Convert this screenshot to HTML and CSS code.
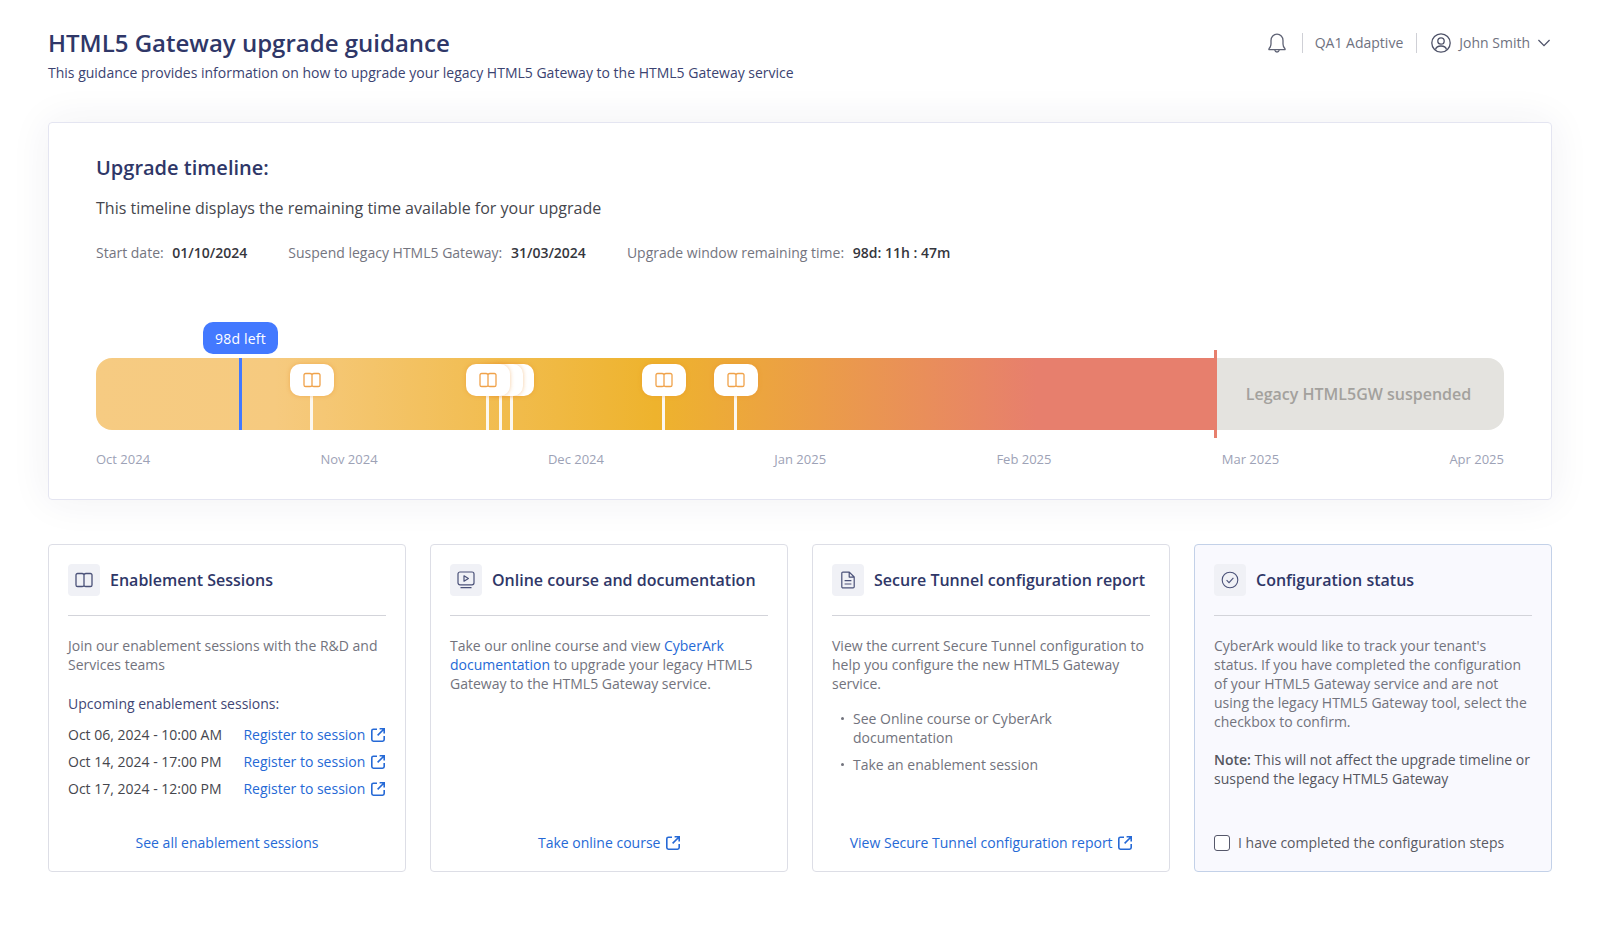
FILE: index.html
```html
<!DOCTYPE html>
<html lang="en">
<head>
    <meta charset="UTF-8">
    <meta name="viewport" content="width=device-width, initial-scale=1.0">
    <title>HTML5 Gateway upgrade guidance</title>
    <link rel="stylesheet" href="styles.css">
</head>
<body>
    <svg class="sprites" width="0" height="0">
        <symbol id="ico-book" viewBox="0 0 18 16">
            <path d="M9 2.500C8.500 1.900 7.800 1.500 7 1.500H2.600C1.700 1.500 1 2.200 1 3.100v9.800c0 .9.7 1.600 1.600 1.600H7c.8 0 1.500-.2 2-.7.5.5 1.200.7 2 .7h4.400c.9 0 1.600-.7 1.600-1.600V3.100c0-.9-.7-1.600-1.600-1.600H11c-.8 0-1.500.4-2 1zM9 2.500v11.300" fill="none" stroke="currentColor" stroke-width="1.300" stroke-linejoin="round"/>
        </symbol>
        <symbol id="ico-external" viewBox="0 0 14 14">
            <path d="M6 1.200H2.400C1.500 1.200.8 1.900.8 2.800v8.800c0 .9.7 1.600 1.600 1.600h9.200c.9 0 1.600-.7 1.600-1.600V8M8.600.8h4.600v4.600M13 1 6.600 7.400" fill="none" stroke="currentColor" stroke-width="1.600"/>
        </symbol>
    </svg>

    <!-- Page title and user bar -->
    <header class="page-head">
        <div>
            <h1 class="page-title">HTML5 Gateway upgrade guidance</h1>
            <p class="page-sub">This guidance provides information on how to upgrade your legacy HTML5 Gateway to the HTML5 Gateway service</p>
        </div>
        <div class="user-bar">
            <svg class="bell" width="22" height="22" viewBox="0 0 22 22" fill="none" stroke="currentColor" stroke-width="1.300">
                <path d="M3 16.800c1.300-1.300 2-2.700 2-4.800V8.500C5 5 7.600 2.200 11 2.200S17 5 17 8.500V12c0 2.100.7 3.500 2 4.800.3.400.1.900-.4.900H3.400c-.5 0-.7-.5-.4-.9z" stroke-linejoin="round"/>
                <path d="M8.800 18c.2 1.200 1.100 2 2.200 2s2-.8 2.200-2"/>
            </svg>
            <span class="user-sep"></span>
            <span class="user-text">QA1 Adaptive</span>
            <span class="user-sep"></span>
            <svg class="user-ico" width="20" height="20" viewBox="0 0 20 20" fill="none" stroke="currentColor" stroke-width="1.300">
                <circle cx="10" cy="10" r="9.200"/>
                <circle cx="10" cy="8" r="3.200"/>
                <path d="M4.500 16.500c.6-2.400 2.500-3.500 5.500-3.500s4.900 1.100 5.500 3.500"/>
            </svg>
            <span class="user-text">John Smith</span>
            <svg class="chevron" width="12" height="8" viewBox="0 0 12 8" fill="none" stroke="currentColor" stroke-width="1.300">
                <path d="M.4 1 6 6.600 11.600 1"/>
            </svg>
        </div>
    </header>

    <!-- Timeline -->
    <section class="timeline-card">
        <h2 class="timeline-title">Upgrade timeline:</h2>
        <p class="timeline-text">This timeline displays the remaining time available for your upgrade</p>
        <div class="stats">
            <span>Start date: <b>01/10/2024</b></span>
            <span>Suspend legacy HTML5 Gateway: <b>31/03/2024</b></span>
            <span>Upgrade window remaining time: <b>98d: 11h : 47m</b></span>
        </div>

        <div class="bar">
            <div class="bar-elapsed"></div>
            <div class="bar-suspended">Legacy HTML5GW suspended</div>
            <span class="bar-end"></span>

            <div class="now" style="left: 145px">
                <span class="now-label">98d left</span>
            </div>

            <div class="pin" style="left: 216px"><span class="pin-box"><svg><use href="#ico-book"/></svg></span></div>
            <div class="pin" style="left: 416px"><span class="pin-box"></span></div>
            <div class="pin" style="left: 405px"><span class="pin-box"></span></div>
            <div class="pin" style="left: 392px"><span class="pin-box"><svg><use href="#ico-book"/></svg></span></div>
            <div class="pin" style="left: 568px"><span class="pin-box"><svg><use href="#ico-book"/></svg></span></div>
            <div class="pin" style="left: 640px"><span class="pin-box"><svg><use href="#ico-book"/></svg></span></div>
        </div>

        <div class="axis">
            <span>Oct 2024</span>
            <span>Nov 2024</span>
            <span>Dec 2024</span>
            <span>Jan 2025</span>
            <span>Feb 2025</span>
            <span>Mar 2025</span>
            <span>Apr 2025</span>
        </div>
    </section>

    <!-- Cards -->
    <section class="cards">
        <article class="card">
            <div class="card-head">
                <span class="card-ico"><svg width="18" height="16"><use href="#ico-book"/></svg></span>
                <h3 class="card-title">Enablement Sessions</h3>
            </div>
            <p class="card-text">Join our enablement sessions with the R&amp;D and Services teams</p>
            <p class="upcoming">Upcoming enablement sessions:</p>
            <ul class="sessions">
                <li><span>Oct 06, 2024 - 10:00 AM</span><a class="link" href="#">Register to session <svg class="ext"><use href="#ico-external"/></svg></a></li>
                <li><span>Oct 14, 2024 - 17:00 PM</span><a class="link" href="#">Register to session <svg class="ext"><use href="#ico-external"/></svg></a></li>
                <li><span>Oct 17, 2024 - 12:00 PM</span><a class="link" href="#">Register to session <svg class="ext"><use href="#ico-external"/></svg></a></li>
            </ul>
            <div class="card-foot"><a class="link" href="#">See all enablement sessions</a></div>
        </article>

        <article class="card">
            <div class="card-head">
                <span class="card-ico">
                    <svg width="18" height="18" viewBox="0 0 18 18" fill="none" stroke="currentColor" stroke-width="1.200">
                        <rect x="1" y="1" width="16" height="12.800" rx="2"/>
                        <path d="M7 4.800v5.400l4.400-2.700zM3.500 16.600h11" stroke-linejoin="round"/>
                    </svg>
                </span>
                <h3 class="card-title">Online course and documentation</h3>
            </div>
            <p class="card-text">Take our online course and view <a class="link" href="#">CyberArk documentation</a> to upgrade your legacy HTML5 Gateway to the HTML5 Gateway service.</p>
            <div class="card-foot"><a class="link" href="#">Take online course <svg class="ext"><use href="#ico-external"/></svg></a></div>
        </article>

        <article class="card">
            <div class="card-head">
                <span class="card-ico">
                    <svg width="18" height="18" viewBox="0 0 18 18" fill="none" stroke="currentColor" stroke-width="1.200">
                        <path d="M2.800 2.200c0-.6.5-1.100 1.100-1.100h6.400l4.900 4.900v9.800c0 .6-.5 1.100-1.100 1.100H3.900c-.6 0-1.100-.5-1.100-1.100zM10.200 1.200v4.900h5M5.600 9.600h6.800M5.600 13h6.800" stroke-linejoin="round"/>
                    </svg>
                </span>
                <h3 class="card-title">Secure Tunnel configuration report</h3>
            </div>
            <p class="card-text">View the current Secure Tunnel configuration to help you configure the new HTML5 Gateway service.</p>
            <ul class="bullets">
                <li>See Online course or CyberArk documentation</li>
                <li>Take an enablement session</li>
            </ul>
            <div class="card-foot"><a class="link" href="#">View Secure Tunnel configuration report <svg class="ext"><use href="#ico-external"/></svg></a></div>
        </article>

        <article class="card card-status">
            <div class="card-head">
                <span class="card-ico">
                    <svg width="18" height="18" viewBox="0 0 18 18" fill="none" stroke="currentColor" stroke-width="1.100">
                        <circle cx="9" cy="9" r="7.800"/>
                        <path d="M5.600 9.200 8 11.600l4.400-4.800"/>
                    </svg>
                </span>
                <h3 class="card-title">Configuration status</h3>
            </div>
            <p class="card-text">CyberArk would like to track your tenant's status. If you have completed the configuration of your HTML5 Gateway service and are not using the legacy HTML5 Gateway tool, select the checkbox to confirm.</p>
            <p class="card-note"><b>Note:</b> This will not affect the upgrade timeline or suspend the legacy HTML5 Gateway</p>
            <label class="check">
                <span class="check-box"></span>
                I have completed the configuration steps
            </label>
        </article>
    </section>
</body>
</html>
```

FILE: styles.css
```css
* {
    box-sizing: border-box;
}

body {
    margin: 0;
    padding: 0 48px;
    background: #fff;
    font-family: "Open Sans", sans-serif;
    font-size: 14px;
    color: #4d4f5c;
}

h1, h2, h3, p, ul {
    margin: 0;
    padding: 0;
}

ul {
    list-style: none;
}

.sprites {
    position: absolute;
}

/* Header */
.page-head {
    display: flex;
    justify-content: space-between;
    padding-top: 27px;
}

.page-title {
    font-size: 24px;
    line-height: 32px;
    font-weight: 600;
    color: #2f3768;
}

.page-sub {
    margin-top: 4px;
    line-height: 20px;
    color: #3b4371;
}

.user-bar {
    display: flex;
    align-items: center;
    height: 32px;
    color: #6f727f;
}

.user-text {
    margin-top: -2px;
}

.bell {
    margin-right: 2px;
    color: #5f6375;
}

.user-sep {
    width: 1px;
    height: 20px;
    margin: 0 12px;
    background: #cfd0d6;
}

.user-text + .user-sep {
    margin-left: 13px;
}

.user-ico {
    margin: 0 8px 0 2px;
    color: #4e5268;
}

.chevron {
    margin: 0 2px 0 8px;
    color: #4e5268;
}

/* Timeline card */
.timeline-card {
    height: 378px;
    margin-top: 39px;
    padding: 31px 47px 0;
    border: 1px solid #e4e5f1;
    border-radius: 4px;
    box-shadow: 0 0 40px rgba(40, 44, 90, 0.07);
}

.timeline-title {
    font-size: 20px;
    line-height: 28px;
    font-weight: 600;
    color: #2f3768;
}

.timeline-text {
    margin-top: 14px;
    font-size: 16px;
    line-height: 24px;
    color: #45464d;
}

.stats {
    display: flex;
    gap: 41px;
    margin-top: 23px;
    line-height: 20px;
    color: #74757f;
}

.stats b {
    margin-left: 5px;
    font-weight: 600;
    color: #35363d;
}

.bar {
    position: relative;
    display: flex;
    height: 72px;
    margin-top: 95px;
}

.bar-elapsed {
    width: 1119px;
    border-radius: 16px 0 0 16px;
    background: linear-gradient(90deg, #f6cb82 0%, #f6ca7f 16%, #eeb32d 50%, #e77f6d 84%, #e77f6d 100%);
}

.bar-suspended {
    flex: 1;
    display: flex;
    align-items: center;
    justify-content: center;
    padding-right: 2px;
    border-radius: 0 16px 16px 0;
    background: #e4e3df;
    font-size: 16px;
    font-weight: 600;
    color: #a3a19d;
}

.bar-end {
    position: absolute;
    left: 1118px;
    top: -8px;
    width: 3px;
    height: 88px;
    background: #e77f6d;
}

.now {
    position: absolute;
    top: 0;
    bottom: 0;
    width: 3px;
    margin-left: -2px;
    background: #4379ff;
}

.now-label {
    position: absolute;
    left: -36px;
    top: -36px;
    display: flex;
    align-items: center;
    justify-content: center;
    width: 75px;
    height: 32px;
    border-radius: 10px;
    background: #4379ff;
    color: #fff;
    letter-spacing: 0.2px;
}

.pin {
    position: absolute;
    top: 38px;
    bottom: 0;
    width: 3px;
    margin-left: -2px;
    background: #fcf8f0;
}

.pin-box {
    position: absolute;
    left: -20px;
    top: -32px;
    display: flex;
    align-items: center;
    justify-content: center;
    width: 44px;
    height: 32px;
    border-radius: 10px;
    background: #fff;
    box-shadow: 0 0 4px rgba(232, 140, 40, 0.45);
    color: #f0a24a;
}

.pin-box svg {
    width: 18px;
    height: 16px;
}

.axis {
    display: flex;
    justify-content: space-between;
    margin-top: 20px;
    font-size: 13px;
    line-height: 18px;
    color: #9da2b6;
}

/* Cards */
.cards {
    display: grid;
    grid-template-columns: repeat(4, 1fr);
    gap: 24px;
    margin-top: 44px;
}

.card {
    display: flex;
    flex-direction: column;
    height: 328px;
    padding: 19px;
    border: 1px solid #dddee6;
    border-radius: 4px;
    line-height: 19px;
}

.card-status {
    border-color: #c3d1e8;
    background: #f9f9fe;
}

.card-head {
    display: flex;
    align-items: center;
    gap: 10px;
    padding-bottom: 19px;
    border-bottom: 1px solid #d3d4da;
}

.card-ico {
    display: flex;
    align-items: center;
    justify-content: center;
    width: 32px;
    height: 32px;
    border-radius: 4px;
    background: #f0f1f6;
    color: #4a5178;
}

.card-title {
    font-size: 16px;
    line-height: 22px;
    font-weight: 600;
    color: #2f3768;
}

.card-text {
    margin-top: 20px;
    color: #72737d;
}

.upcoming {
    margin-top: 20px;
    color: #3f4775;
}

.sessions {
    display: flex;
    flex-direction: column;
    gap: 8px;
    margin-top: 12px;
    color: #45464d;
}

.sessions li {
    display: flex;
    justify-content: space-between;
}

.sessions .link {
    padding-right: 1px;
}

.link {
    color: #2569d6;
    text-decoration: none;
}

.ext {
    width: 14px;
    height: 14px;
    margin-left: 2px;
    vertical-align: -2px;
}

.card-foot {
    margin-top: auto;
    text-align: center;
}

.bullets {
    display: flex;
    flex-direction: column;
    gap: 8px;
    margin-top: 16px;
    color: #72737d;
}

.bullets li {
    display: flex;
    gap: 9px;
}

.bullets li::before {
    content: "";
    flex: none;
    width: 3px;
    height: 3px;
    margin: 8px 0 0 9px;
    border-radius: 50%;
    background: #72737d;
}

.card-note {
    margin-top: 19px;
    color: #55565f;
}

.card-note b {
    font-weight: 600;
}

.check {
    display: flex;
    align-items: center;
    gap: 8px;
    margin-top: auto;
    color: #5a5b64;
}

.check-box {
    width: 16px;
    height: 16px;
    border: 1px solid #55576a;
    border-radius: 3px;
    background: #fff;
}
```
